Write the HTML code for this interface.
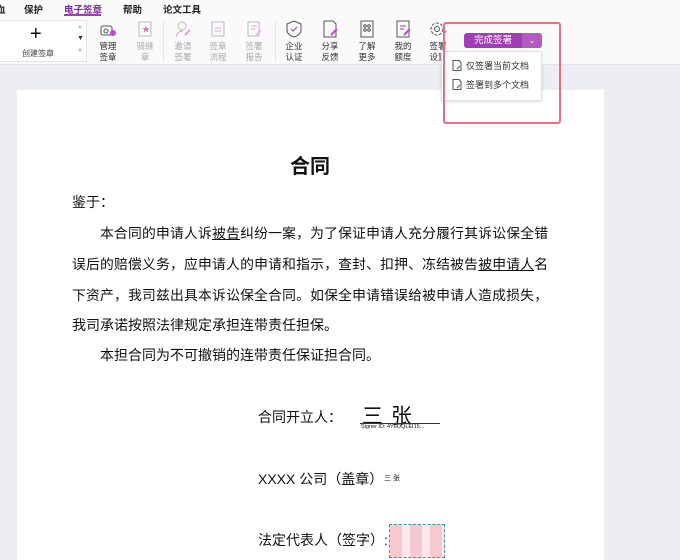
<!DOCTYPE html><html><head><meta charset="utf-8"><style>
*{margin:0;padding:0;box-sizing:border-box}
body{width:680px;height:556px;overflow:hidden;background:#eceef3;font-family:"Liberation Sans","Noto Sans CJK SC",sans-serif;position:relative;color:#111}
.a{position:absolute}
.top{left:0;top:0;width:680px;height:65px;background:#fafafa;border-bottom:1px solid #e2e4ea}
.tab{top:2px;font-size:9.5px;font-weight:bold;color:#222}
.btn{top:20px;width:34px;text-align:center;font-size:8.5px;line-height:11px;color:#333}
.btn.g{color:#aaa}
.btn svg{display:block;margin:0 auto 3px}
.page{left:17px;top:90px;width:587px;height:470px;background:#fff}
.p{font-size:13.8px;left:72px;width:476px;text-align-last:justify;text-align:justify;white-space:nowrap}
.menu{font-size:9px;color:#333;display:flex;align-items:center;gap:4px;z-index:5}
</style></head><body>
<div class="a top"></div>
<div class="a page"></div>
<div class="a tab" style="left:-4px">血</div>
<div class="a tab" style="left:24px">保护</div>
<div class="a tab" style="left:64px;color:#7b2a96">电子签章</div>
<div class="a" style="left:64px;top:14px;width:37px;height:2px;background:#a43cb5"></div>
<div class="a tab" style="left:123px">帮助</div>
<div class="a tab" style="left:163px">论文工具</div>
<div class="a" style="left:0;top:20px;width:87px;height:42px;border:1px solid #e3e3e3;border-left:none;background:#fff"></div>
<div class="a" style="left:30px;top:24px;font-size:20px;font-weight:300;line-height:20px">+</div>
<div class="a" style="left:22px;top:48px;font-size:8px;color:#444">创建签章</div>
<div class="a" style="left:77px;top:24px;font-size:6px;color:#bbb">▲</div>
<div class="a" style="left:77px;top:35px;font-size:7px;color:#333">▼</div>
<div class="a" style="left:77px;top:48px;font-size:6px;color:#bbb">▼</div>
<div class="a" style="left:163px;top:22px;width:1px;height:40px;background:#e6e6e6"></div>
<div class="a" style="left:275px;top:22px;width:1px;height:40px;background:#e6e6e6"></div>
<div class="a btn" style="left:91px"><svg width="18" height="18"><rect x="2" y="6" width="11" height="9" rx="2" fill="none" stroke="#555"/><circle cx="7" cy="11" r="2" fill="none" stroke="#555"/><circle cx="14" cy="13" r="3" fill="#c04bc9"/></svg>管理<br>签章</div>
<div class="a btn g" style="left:128px"><svg width="18" height="18"><rect x="3" y="2" width="12" height="14" fill="none" stroke="#bbb"/><text x="6" y="12" font-size="8" fill="#c7a">★</text></svg>骑缝<br>章</div>
<div class="a btn g" style="left:166px"><svg width="18" height="18"><circle cx="8" cy="6" r="4" fill="none" stroke="#bbb"/><path d="M2 17c1-5 4-6 7-6" fill="none" stroke="#bbb"/><path d="M11 15l5-5" stroke="#d9a5e0" stroke-width="2"/></svg>邀请<br>签署</div>
<div class="a btn g" style="left:201px"><svg width="18" height="18"><rect x="3" y="2" width="12" height="14" fill="none" stroke="#bbb"/><path d="M6 8h6M6 11h6" stroke="#d9a5e0"/></svg>签章<br>流程</div>
<div class="a btn g" style="left:237px"><svg width="18" height="18"><rect x="3" y="2" width="11" height="14" fill="none" stroke="#bbb"/><path d="M6 6h6M6 9h4M11 15l5-5" stroke="#d9a5e0"/></svg>签署<br>报告</div>
<div class="a btn" style="left:277px"><svg width="18" height="18"><path d="M9 1l7 3v6c0 4-4 6-7 7-3-1-7-3-7-7V4z" fill="none" stroke="#555"/><path d="M6 9l2 2 4-4" fill="none" stroke="#a43cb5"/></svg>企业<br>认证</div>
<div class="a btn" style="left:313px"><svg width="18" height="18"><path d="M3 1h9l3 3v13H3z" fill="none" stroke="#555"/><path d="M10 15l6-6" stroke="#c04bc9" stroke-width="2"/></svg>分享<br>反馈</div>
<div class="a btn" style="left:350px"><svg width="18" height="18"><rect x="3" y="1" width="12" height="16" fill="none" stroke="#555"/><circle cx="7" cy="6" r="1.3" fill="none" stroke="#555"/><circle cx="11" cy="6" r="1.3" fill="none" stroke="#555"/><circle cx="7" cy="10" r="1.3" fill="none" stroke="#555"/><circle cx="11" cy="10" r="1.3" fill="none" stroke="#555"/></svg>了解<br>更多</div>
<div class="a btn" style="left:386px"><svg width="18" height="18"><rect x="3" y="1" width="12" height="16" fill="none" stroke="#555"/><path d="M6 6h6M6 9h4" stroke="#a43cb5"/><path d="M10 15l6-6" stroke="#c04bc9" stroke-width="2"/></svg>我的<br>额度</div>
<div class="a btn" style="left:421px"><svg width="18" height="18"><circle cx="8" cy="9" r="6" fill="none" stroke="#555" stroke-dasharray="3 1.5"/><circle cx="8" cy="9" r="2.5" fill="none" stroke="#555"/><path d="M13 10l4 2" stroke="#c04bc9" stroke-width="2"/></svg>签署<br>设置</div>
<div class="a" style="left:464px;top:33px;width:78px;height:15px;background:#a43cb5;border-radius:3px;color:#fff;font-size:9.5px;line-height:15px;padding-left:10px">完成签署<span style="position:absolute;left:58px;top:0;width:20px;height:15px;background:#b35bc2;border-radius:0 3px 3px 0;text-align:center;font-size:8px">⌄</span></div>
<div class="a" style="left:441px;top:51px;width:101px;height:50px;background:#fff;border:1px solid #e2e2e2;box-shadow:0 1px 3px rgba(0,0,0,.12);z-index:4"></div>
<div class="a menu" style="left:452px;top:59px"><svg width="10" height="11"><path d="M1 .5h6l2 2v8H1z" fill="none" stroke="#555"/><path d="M5 9l3-3" stroke="#555"/></svg>仅签署当前文档</div>
<div class="a menu" style="left:452px;top:78px"><svg width="10" height="11"><path d="M1 .5h6l2 2v8H1z" fill="none" stroke="#555"/><path d="M5 9l3-3" stroke="#555"/></svg>签署到多个文档</div>
<div class="a" style="left:443px;top:22px;width:118px;height:102px;border:2px solid #f16b7c;border-radius:3px;z-index:6"></div>
<div class="a" style="left:290px;top:150px;font-size:20px;font-weight:bold">合同</div>
<div class="a" style="left:72px;top:192px;font-size:14px">鉴于：</div>
<div class="a p" style="top:222px;left:100px;width:448px">本合同的申请人诉<u>被告</u>纠纷一案，为了保证申请人充分履行其诉讼保全错</div>
<div class="a p" style="top:253px">误后的赔偿义务，应申请人的申请和指示，查封、扣押、冻结被告<u>被申请人</u>名</div>
<div class="a p" style="top:284px">下资产，我司兹出具本诉讼保全合同。如保全申请错误给被申请人造成损失，</div>
<div class="a" style="top:315px;left:72px;font-size:14px">我司承诺按照法律规定承担连带责任担保。</div>
<div class="a" style="top:345px;left:100px;font-size:14px">本担合同为不可撤销的连带责任保证担合同。</div>
<div class="a" style="top:407px;left:258px;font-size:14px">合同开立人：</div>
<div class="a" style="top:400px;left:362px;font-size:21px;letter-spacing:8px">三张</div>
<div class="a" style="top:423px;left:360px;width:80px;height:1px;background:#333"></div>
<div class="a" style="top:424px;left:361px;font-size:5.5px">Signer ID: 4Y6OQLEI15...</div>
<div class="a" style="top:469px;left:258px;font-size:14px">XXXX 公司（盖章）</div>
<div class="a" style="top:473px;left:384px;font-size:7px">三 张</div>
<div class="a" style="top:530px;left:258px;font-size:14px">法定代表人（签字）:</div>
<div class="a" style="top:524px;left:389px;width:56px;height:34px;border:1px dashed #3a9a9a;background:repeating-linear-gradient(90deg,#f7c9cf 0 12px,#fde9ec 12px 20px)"></div>
</body></html>
